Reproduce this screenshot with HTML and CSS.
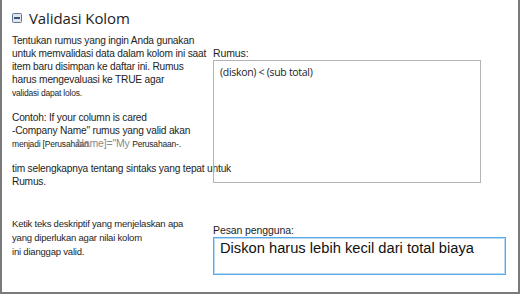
FILE: index.html
```html
<!DOCTYPE html>
<html lang="id">
    <head>
        <meta charset="UTF-8" />
        <title>Validasi Kolom</title>
        <link rel="stylesheet" href="styles.css">
    </head>
    <body>
        <div class="frame">
            <div class="header">
                <svg class="toggle" width="10" height="10" viewBox="0 0 10 10">
                    <rect x="0.5" y="0.5" width="9" height="9" rx="1" fill="#dfe6ef" stroke="#5f7590" />
                    <rect x="2" y="4" width="6" height="2" fill="#3c5472" />
                </svg>
                <span class="title">Validasi Kolom</span>
            </div>

            <div class="section first">
                <div class="desc">
                    <p>Tentukan rumus yang ingin Anda gunakan<br>untuk memvalidasi data dalam kolom ini saat<br>item baru disimpan ke daftar ini. Rumus<br>harus mengevaluasi ke TRUE agar<br><span class="tiny">validasi dapat lolos.</span></p>
                    <p>Contoh: If your column is cared<br>-Company Name" rumus yang valid akan<br><span class="tiny">menjadi [Perusahaan</span><span class="ghost">Name]="My</span> <span class="tiny">Perusahaan-.</span></p>
                    <p>tim selengkapnya tentang sintaks yang tepat untuk<br>Rumus.</p>
                </div>
                <div class="field">
                    <label>Rumus:</label>
                    <div class="box formula">(diskon) &lt; (sub total)</div>
                </div>
            </div>

            <div class="section second">
                <div class="desc">
                    <p>Ketik teks deskriptif yang menjelaskan apa<br>yang diperlukan agar nilai kolom<br>ini dianggap valid.</p>
                </div>
                <div class="field">
                    <label>Pesan pengguna:</label>
                    <div class="box message">Diskon harus lebih kecil dari total biaya</div>
                </div>
            </div>
        </div>
    </body>
</html>
```
FILE: styles.css
```css
body {
    margin: 0;
    font-family: "Liberation Sans", Arial, sans-serif;
    color: #1e1e1e;
    background: #fff;
}
.frame {
    width: 520px;
    height: 294px;
    box-sizing: border-box;
    border: 2px solid #7a7a7a;
    border-top: none;
    padding: 0 10px;
}
.header {
    display: flex;
    align-items: center;
    gap: 7px;
    height: 33px;
    padding-top: 3px;
    box-sizing: border-box;
}
.toggle {
    flex: none;
}
.title {
    font-family: "Open Sans", sans-serif;
    font-size: 15px;
    letter-spacing: -0.1px;
}
.section {
    display: grid;
    grid-template-columns: 192px 1fr;
    column-gap: 9px;
}
.first {
    height: 172px;
}
.desc {
    font-size: 10.2px;
    line-height: 13px;
    letter-spacing: -0.2px;
    white-space: nowrap;
    padding-top: 1px;
}
.desc p {
    margin: 0 0 11px 0;
}
.tiny {
    font-size: 8.5px;
}
.ghost {
    font-size: 10.5px;
    color: #8a8a8a;
    margin-left: -12px;
}
.field {
    display: flex;
    flex-direction: column;
}
.field label {
    font-size: 10.5px;
    line-height: 13px;
    letter-spacing: -0.1px;
}
.first .field {
    padding-top: 14px;
}
.formula {
    width: 268px;
    height: 123px;
    box-sizing: border-box;
    border: 1px solid #b4b4b4;
    font-family: "Open Sans", sans-serif;
    font-size: 10.5px;
    letter-spacing: -0.3px;
    padding: 4px 6px;
}
.second .desc {
    padding-top: 12px;
    font-size: 9.5px;
    line-height: 14px;
}
.second .field {
    padding-top: 19px;
}
.message {
    width: 293px;
    height: 38px;
    box-sizing: border-box;
    border: 1px solid #5aa7e6;
    box-shadow: inset 0 0 0 1px #b9dbf5;
    font-size: 14.7px;
    padding: 2px 6px;
    color: #111;
}
```
